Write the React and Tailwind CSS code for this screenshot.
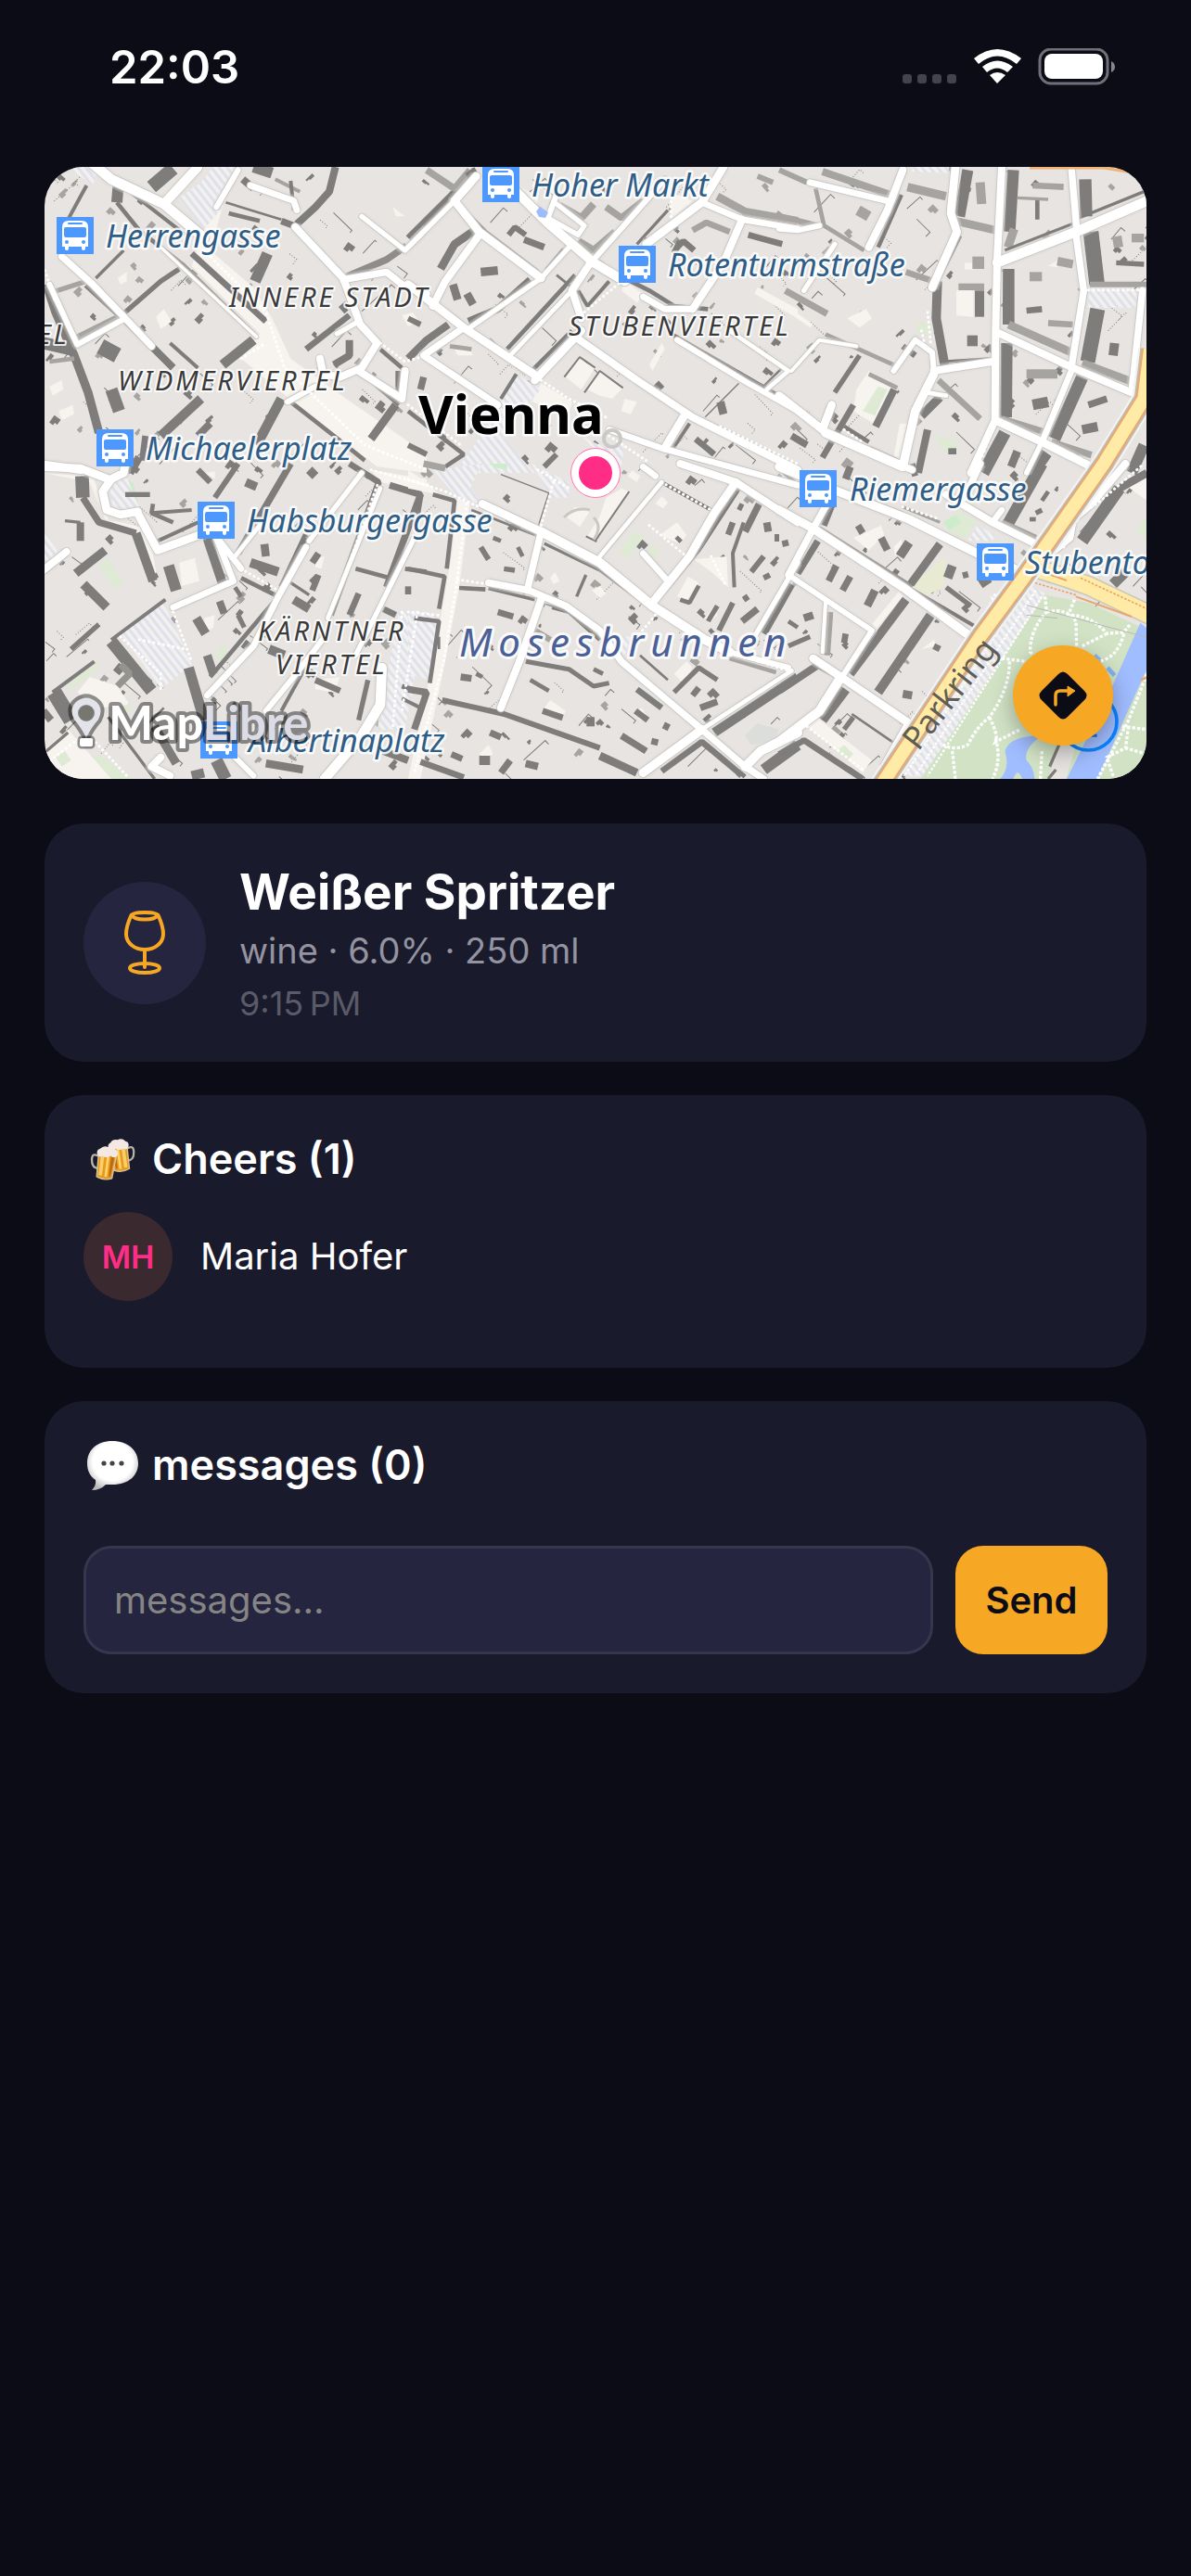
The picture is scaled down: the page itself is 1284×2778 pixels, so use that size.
import React from "react";

const DARK = "#7f7d7b";
const LIGHT = "#a6a4a1";
const CREAM = "#f7f4ef";
const GREEN = "#dfead4";

/* The map is drawn in six tiles. Each tile has its own units, three to a map pixel. */
const tiles = [
  {
    x: 40, y: 170,
    hatch: ["460,130 530,80 570,30 650,30 600,160 540,230", "100,30 200,30 180,90"],
    areas: [
      [CREAM, "540,230 600,160 560,300 700,420 760,520 820,650 1000,780 1260,960 1260,1020 1100,1000 900,850 660,650 720,570 500,350"],
      [CREAM, "385,515 410,490 435,530 400,555"], [CREAM, "260,390 290,370 290,400 270,410"],
      [CREAM, "40,740 80,720 85,750 50,770"], [CREAM, "70,820 115,800 120,830 80,850"],
      [CREAM, "1180,510 1215,500 1235,530 1200,545"], [CREAM, "1150,160 1190,190 1160,190"],
    ],
    walls: [
      [36, "262,95 258,145"], [14, "258,145 330,235 470,345 700,570"], [12, "300,110 480,250"], [44, "370,95 440,35"],
      [20, "500,310 740,530"], [36, "705,400 745,310"], [24, "840,215 900,160 945,110 965,30"],
      [22, "1000,385 1130,330 1195,285", "#8f8d8a"], [16, "285,500 400,400 460,360"], [24, "160,410 280,520 440,680"],
      [28, "30,410 60,500 120,640 165,760 200,890"], [32, "600,670 700,590"], [26, "120,590 260,520", LIGHT],
      [16, "50,435 160,400", LIGHT], [30, "400,900 530,780"], [32, "790,780 710,930"], [14, "820,790 960,900 1060,980"],
      [12, "1040,690 1170,800"], [26, "1160,800 1080,910"], [22, "1170,690 1170,760"], [20, "870,620 1010,510"],
      [40, "240,750 265,820"], [50, "205,610 260,640"], [14, "1110,620 1180,680"], [12, "100,200 160,90"], [10, "190,390 280,300"],
      [12, "770,70 850,110", LIGHT], [24, "665,70 700,100"], [36, "700,30 760,50"], [14, "620,180 720,205"], [8, "610,145 790,200"],
      [24, "1010,590 1010,640 960,670"], [12, "430,600 520,680"], [22, "790,205 830,220"], [12, "820,75 830,170"], [40, "20,600 110,620"],
      [14, "40,660 120,650", LIGHT], [20, "350,900 340,980"], [26, "330,970 300,1020"], [12, "460,860 510,790"], [24, "520,900 560,860"],
    ],
    roads: [
      [30, "180,20 240,70 410,150 540,260"], [28, "410,150 520,30"], [16, "580,160 650,40"], [18, "690,90 830,140 840,170"],
      [22, "835,225 990,390 1045,540 1100,600 1050,680 980,710 925,700 915,650"], [20, "990,395 1130,370 1180,410 1260,440"],
      [14, "1050,190 1190,300 1260,230"], [20, "80,320 180,410 285,520 370,610"], [16, "285,520 130,605 40,410"],
      [24, "0,990 140,1010"], [22, "1040,690 1180,780 1190,690"], [16, "810,790 900,740"], [8, "400,290 710,580"],
      [14, "1040,530 970,570"],
    ],
    dots: ["540,300 740,500 800,680 1060,930 1260,1010", "660,650 740,600", "1110,600 1190,660 1260,640", "20,350 60,470"],
  },
  {
    x: 440, y: 170,
    hatch: ["350,700 430,750 380,800 300,900 410,1020 150,1020 270,850", "560,900 640,940 700,920 690,1000 600,940"],
    areas: [
      [CREAM, "510,710 550,650 605,680 560,750"], [CREAM, "580,750 620,690 695,745 660,780 620,770"], [CREAM, "360,90 420,130 410,190 350,130"],
      [CREAM, "470,200 550,250 545,280 460,230"], [CREAM, "850,110 920,140 850,200"], [CREAM, "700,400 760,440 740,470 690,430"],
      [CREAM, "150,620 200,620 210,640 160,640"], [CREAM, "700,780 740,790 720,830 690,820"], [CREAM, "430,730 530,790 520,830 400,790"],
      [CREAM, "1130,420 1260,490 1260,520 1120,440"], [CREAM, "780,670 820,600 830,620 790,690"], ["#9dbcfc", "412,165 425,158 453,178 445,195 425,192"],
      ["#cdeccc", "255,960 300,945 328,980 300,1010 260,1000"],
    ],
    walls: [
      [20, "0,260 140,120 215,40"], [26, "105,360 150,280 215,235"], [14, "160,150 250,240 420,370"], [24, "195,530 290,490 395,395"],
      [14, "320,620 540,380"], [14, "400,690 530,560"], [24, "0,650 60,590 130,540"], [20, "450,365 505,300"], [12, "300,780 350,700"],
      [24, "490,155 560,195 600,150", LIGHT], [24, "550,270 600,300 670,240", LIGHT], [22, "640,160 690,195 760,140", LIGHT],
      [14, "615,335 680,380 780,430 860,480 970,490"], [12, "550,430 580,480 650,400"], [12, "570,590 740,720 930,840"],
      [14, "850,570 1250,800"], [26, "1000,125 1090,175 1260,205", LIGHT], [20, "920,235 965,210 1040,240", LIGHT], [14, "0,820 180,960 120,1000"],
      [8, "1150,740 1210,680"], [4, "960,840 1070,730"], [12, "850,950 910,860"], [22, "60,40 150,100 200,40", LIGHT], [6, "505,710 555,645 605,680"],
      [6, "570,760 620,690 695,745"], [4, "340,650 400,690"], [18, "325,250 345,225 380,250"], [22, "375,265 440,290"], [28, "235,370 290,365"],
      [26, "145,410 160,460"], [26, "190,440 210,475"], [14, "135,610 205,620", LIGHT], [22, "50,710 40,750"], [20, "870,290 890,270 925,300"],
      [20, "1100,250 1210,280"], [18, "1130,60 1180,80", LIGHT], [10, "740,280 840,170"], [20, "930,910 990,960"], [8, "480,380 530,420"],
      [26, "1010,790 1020,830"], [20, "880,270 860,310"], [18, "480,960 440,1000"], [18, "0,930 60,960"], [22, "220,40 190,60"],
      [18, "0,520 40,540"],
    ],
    roads: [
      [28, "320,80 450,210 600,340 700,400"], [18, "760,450 830,490 920,490"], [24, "220,60 150,140 230,240 430,390"], [14, "150,140 0,290"],
      [22, "230,250 120,400 80,480"], [24, "0,410 180,550 420,710"], [22, "590,340 530,430 560,520"], [24, "560,560 410,720"],
      [22, "540,580 740,720 920,840 1260,1010"], [14, "200,550 430,390 520,290"], [20, "180,550 50,640 290,800"], [12, "330,640 530,430"],
      [16, "600,330 760,150 830,70"], [16, "450,200 480,120"], [14, "460,200 550,250 570,220 480,150"], [24, "770,280 950,145 1020,30"],
      [18, "950,145 1080,200 1260,230"], [22, "1080,200 1020,340 920,490"], [16, "870,590 1100,730 1260,820"], [12, "1040,560 1230,690 1160,750"],
      [18, "650,880 820,940 1260,1060"], [24, "890,840 830,940"],
    ],
    dots: ["570,500 690,400", "430,720 520,780 640,840", "650,900 770,980", "850,110 850,200", "420,720 540,580", "0,800 170,930", "1010,870 1260,990"],
  },
  {
    x: 840, y: 170,
    hatch: ["1000,425 1180,425 1160,485 1000,485", "430,30 550,30 550,50 430,45"],
    areas: [
      [CREAM, "600,340 630,340 630,362 600,362"], [CREAM, "573,430 628,430 628,515 573,510"], [CREAM, "250,750 290,690 385,750 320,870 240,820"],
      [GREEN, "320,740 350,750 310,835 270,820"], [GREEN, "500,900 560,910 580,930 540,960"], [CREAM, "870,350 905,330 900,355"],
      [GREEN, "1005,445 1080,445 1080,480 1005,480"], [CREAM, "390,860 440,860 390,980 370,970"], [CREAM, "0,460 110,540 100,550 0,480"],
      [CREAM, "220,520 280,490 300,520 260,550"], [GREEN, "440,540 490,530 490,570 450,570"],
    ],
    walls: [
      [24, "140,45 360,120", LIGHT], [14, "320,290 395,120"], [28, "415,95 540,125", LIGHT], [36, "583,190 610,40"], [26, "570,205 700,235", LIGHT],
      [38, "745,240 757,40"], [40, "993,190 990,70"], [28, "740,290 760,230", LIGHT], [26, "510,390 580,250"], [30, "512,400 508,520 535,670"],
      [38, "742,360 742,540"], [26, "742,540 950,632", LIGHT], [50, "1008,240 1028,410"], [18, "1005,410 1190,410", LIGHT], [48, "1030,490 998,660"],
      [26, "980,665 1140,725", LIGHT], [38, "736,600 734,840"], [22, "720,845 858,888", LIGHT], [40, "980,710 890,910"], [22, "880,920 1010,962", LIGHT],
      [40, "730,890 660,1020"], [38, "865,955 820,1020"], [16, "180,760 260,640"], [20, "240,800 140,970"], [24, "372,750 312,870"],
      [14, "290,700 382,745", LIGHT], [22, "20,430 155,505", LIGHT], [14, "150,572 370,670", LIGHT], [14, "118,100 145,220 275,300", LIGHT],
      [20, "515,720 650,845", LIGHT], [28, "460,835 520,775"], [24, "480,880 450,1020"], [30, "648,430 648,515"], [22, "580,418 663,418", LIGHT],
      [40, "625,340 663,340", LIGHT], [20, "820,90 920,95", LIGHT], [14, "835,130 835,200"], [10, "770,130 870,135", LIGHT], [28, "900,335 950,345", LIGHT],
      [30, "810,385 850,385", LIGHT], [20, "800,495 850,490"], [20, "870,535 950,540", LIGHT], [34, "625,575 625,610"], [30, "1085,600 1080,640"],
      [10, "540,660 690,650"], [20, "410,370 500,400", LIGHT], [30, "650,80 655,150", LIGHT], [30, "800,700 900,700", LIGHT], [34, "820,800 870,790"],
      [22, "1000,800 1060,780"], [30, "980,880 1030,870"], [10, "730,300 960,210"], [10, "970,195 1180,110"], [14, "210,870 290,920"],
      [18, "290,940 380,980", LIGHT], [20, "400,610 440,640"], [34, "255,170 290,190", LIGHT], [36, "1180,930 1140,1020"], [20, "1070,100 1080,90", LIGHT],
      [36, "1080,275 1110,270", LIGHT], [28, "1140,260 1180,260", LIGHT], [16, "1090,340 1180,345"], [26, "770,950 750,1000"], [20, "0,190 120,220", LIGHT],
      [26, "560,940 560,960"], [22, "40,900 90,930"], [18, "0,40 90,80", LIGHT],
    ],
    roads: [
      [22, "400,40 350,170 290,290"], [24, "570,30 555,180 575,240 495,420"], [22, "720,30 705,330 700,560 698,850 620,1020"],
      [30, "705,340 960,240 1190,140"], [20, "960,250 985,430 945,680"], [20, "945,30 962,230"], [22, "705,565 950,680 1140,760"],
      [22, "500,690 690,660"], [26, "500,700 440,820 400,1000"], [16, "500,690 495,630 440,590 370,690"], [24, "700,850 850,920 1010,1000"],
      [18, "850,920 945,690"], [14, "850,920 800,1020"], [24, "0,770 140,880 170,800"], [28, "150,890 400,1000"], [18, "100,80 350,140"],
      [20, "1175,430 1140,760"], [10, "40,690 130,590 250,610"], [16, "0,230 60,235 130,220"], [14, "180,280 80,430"], [12, "480,760 540,770"],
    ],
    dots: ["1000,428 1180,428", "460,560 470,600", "640,1010 690,880", "210,880 270,920", "480,500 490,600", "1060,1010 1190,830"],
  },
  {
    x: 40, y: 500,
    hatch: ["270,550 410,450 500,650 400,730 330,630", "1170,480 1260,480 1190,860 1100,860", "20,210 70,290 20,340", "230,60 290,45 330,140 250,160"],
    areas: [
      [CREAM, "20,30 180,40 230,180 330,240 350,300 390,380 360,210 220,180 170,60"], [CREAM, "460,320 510,305 525,380 468,395"], [GREEN, "195,325 230,308 280,390 250,402"],
      ["#cdeccc", "275,50 310,60 328,130 305,140"], [CREAM, "170,690 260,720 300,780 200,790 130,740"], [GREEN, "100,1020 200,940 310,1020"],
      [GREEN, "580,610 610,580 615,610 590,650"], [GREEN, "100,710 200,640 190,670 110,730"], [CREAM, "540,500 575,490 570,530 545,545"],
      [CREAM, "900,310 930,300 920,340 900,335"], [CREAM, "20,930 100,860 240,1020 20,1020"], ["#9dbcfc", "1145,670 1160,655 1175,680 1160,700"],
      [GREEN, "60,950 90,930 110,960 80,980"], [CREAM, "545,30 575,25 575,50"], [CREAM, "1080,20 1260,50 1260,90 1110,60"], [CREAM, "900,700 980,690 960,740 900,730"],
      [GREEN, "270,800 300,770 310,800"],
    ],
    walls: [
      [18, "575,110 650,0"], [44, "145,40 148,110"], [22, "148,110 200,190 320,225"], [30, "320,225 375,380"], [12, "390,250 520,190"], [30, "550,240 602,395"],
      [22, "650,290 820,0"], [20, "790,400 870,230"], [20, "950,490 1105,60 1010,0"], [22, "1130,400 1240,100 1140,70"], [14, "660,370 780,430 560,690"],
      [36, "425,330 450,410"], [28, "125,355 220,280"], [30, "150,390 225,465"], [12, "240,570 415,440"], [40, "240,575 370,735"], [34, "490,660 540,830"],
      [50, "55,740 110,830"], [12, "50,740 185,640"], [16, "110,600 200,520"], [12, "790,800 900,600"], [28, "550,620 570,680"], [28, "380,850 450,970"],
      [40, "580,960 610,1020"], [30, "500,1010 540,1000"], [10, "30,930 100,870"], [16, "1180,720 1260,745"], [16, "285,100 365,100"], [24, "140,190 140,250"],
      [10, "90,185 140,190"], [14, "375,130 370,160 440,190"], [12, "370,160 500,150"], [24, "590,445 605,485"], [30, "515,500 545,550"], [16, "650,490 670,530"],
      [28, "830,440 880,470"], [20, "890,410 910,360"], [22, "890,320 910,290"], [26, "735,260 740,300"], [14, "1030,340 1140,370"], [20, "1010,490 1040,420"],
      [14, "1190,340 1260,350"], [26, "1190,410 1210,410"], [30, "690,320 780,350"], [10, "820,385 880,425"], [26, "740,970 860,990"], [20, "900,700 980,735"],
      [16, "1070,700 1040,830"], [12, "1180,760 1260,800"], [20, "1120,470 1160,490"], [22, "270,650 300,680 260,720", "#96948f"], [30, "750,600 800,620"], [24, "20,800 45,830"],
      [28, "880,20 900,40"], [20, "520,20 560,60"], [28, "675,60 710,75"], [24, "1120,930 1200,960"], [14, "640,400 660,430"], [10, "230,820 380,1020"], [22, "1240,550 1240,600"],
      [16, "370,370 390,360"], [8, "350,850 410,790"],
    ],
    roads: [
      [24, "0,10 140,15 230,50"], [24, "285,0 280,30 240,50 212,90 225,150 270,165 325,155"], [24, "325,160 390,280 540,225"], [18, "580,240 635,380 440,465"],
      [18, "590,250 660,340"], [12, "1110,80 940,500"], [14, "1220,240 1120,440 1030,620"], [14, "1050,30 880,250"], [18, "870,270 780,430 700,590 550,750"],
      [16, "930,560 830,690 740,800"], [30, "1115,660 1110,780 1050,880 930,1020"], [22, "20,345 95,285"], [22, "430,1010 370,980 400,950"], [16, "640,950 700,1010"],
      [12, "720,200 640,300"],
    ],
    dots: ["270,560 400,680 400,730", "330,570 480,600", "440,480 500,640", "320,160 380,280", "660,340 780,410", "1180,480 1150,860", "30,970 160,870 290,1010", "1100,70 960,460", "1080,20 1260,70", "1230,480 1180,800"],
  },
  {
    x: 440, y: 500,
    hatch: ["80,20 240,0 200,80 240,130 160,110", "400,0 520,60 520,110 460,110", "0,480 100,490 70,700 0,680", "640,550 720,560 700,620 650,610"],
    areas: [
      [CREAM, "160,110 200,130 165,400 120,640 40,1020 0,1020 80,640 140,300"], [CREAM, "0,20 60,60 100,100 0,80"], [CREAM, "510,170 540,140 590,150 555,205"],
      [CREAM, "640,110 690,80 715,90 610,250 580,235 620,170"], [GREEN, "685,285 725,220 765,235 710,305"], [GREEN, "770,280 790,260 815,285 790,310"],
      [CREAM, "815,230 870,190 900,230 880,260"], [CREAM, "870,430 905,365 940,385 900,445"], [CREAM, "925,310 1030,300 1035,400 980,350"], [CREAM, "595,410 620,395 640,420 620,435"],
      [CREAM, "860,680 900,640 920,660 890,710"], [CREAM, "440,790 460,765 510,800 500,820"], [CREAM, "735,800 755,790 775,820 750,830"], [CREAM, "230,940 260,910 275,940 250,950"],
      [CREAM, "460,370 475,350 490,380 470,390"], [CREAM, "800,130 820,105 840,125 825,145"], [CREAM, "710,40 725,22 750,40 740,60"], [CREAM, "960,500 990,460 1000,490 975,515"],
      ["#dcdedb", "1090,880 1130,840 1200,860 1180,900 1110,910"], ["#cdeccc", "260,0 320,0 320,20 280,12"],
    ],
    walls: [
      [8, "205,150 420,235"], [4, "300,35 455,95 415,220"], [10, "440,258 620,345 780,465 940,565"], [14, "165,402 250,407"], [12, "260,403 410,440"],
      [13, "430,455 520,480 620,570"], [14, "80,100 150,120 125,340"], [14, "0,340 118,365 100,470"], [14, "20,500 100,510 70,710"], [22, "0,730 60,740 20,860"],
      [15, "380,640 520,665 600,720 650,710"], [18, "110,765 310,810 620,920"], [26, "620,945 740,1000"], [20, "40,965 180,1015"], [10, "690,640 820,760 910,830"],
      [20, "740,730 820,790"], [14, "1070,80 940,280 800,450"], [22, "1135,130 1090,220"], [12, "1085,190 1050,290 1055,400"], [18, "1050,450 1005,540"],
      [24, "1240,390 1150,550"], [30, "990,870 1260,690"], [20, "820,995 950,900 1070,1000"], [36, "1150,990 1260,910"], [16, "860,740 940,660 1000,700"],
      [6, "605,250 715,90"], [4, "625,305 810,60"], [14, "880,440 910,450 940,395"], [16, "970,510 1000,460"], [6, "575,235 610,252"], [10, "15,90 45,100 30,190"],
      [18, "235,270 260,310"], [14, "275,240 300,250"], [16, "310,340 345,345"], [14, "355,270 370,300"], [10, "545,430 575,360"], [20, "290,480 340,495"],
      [22, "170,690 205,695"], [14, "220,680 240,690"], [20, "435,800 500,822"], [14, "395,700 455,735"], [26, "590,820 590,850"], [22, "690,880 770,930"],
      [20, "735,800 775,830"], [22, "265,870 300,885"], [30, "230,960 265,960"], [22, "300,1000 330,960"], [20, "140,940 175,955"], [24, "380,970 420,980"],
      [22, "945,790 1000,770"], [20, "920,750 940,725"], [14, "1040,630 1190,675", LIGHT], [18, "1110,350 1150,300"], [20, "1085,440 1100,430"], [22, "1080,510 1130,470"],
      [18, "1150,370 1170,360"], [24, "1185,240 1200,240"], [20, "1035,230 1050,190"], [24, "1160,190 1165,220"], [16, "1070,150 1080,130"], [22, "870,250 880,240"],
      [14, "600,665 630,680"], [8, "100,600 100,560"], [24, "455,460 440,500", "#e7e4e1"], [20, "410,540 460,570", LIGHT], [8, "750,620 840,700"], [22, "50,0 120,15", LIGHT],
      [20, "830,860 840,840"], [22, "800,890 795,910"], [12, "820,60 980,150"],
    ],
    roads: [
      [24, "240,130 430,220"], [28, "430,220 620,320 790,460 960,570 1040,610"], [20, "430,220 385,410"], [16, "1040,610 1230,660"], [20, "260,385 390,410 510,460 620,540 690,640 820,750 950,860 1090,980 1150,1020"],
      [22, "430,440 360,640 300,790"], [26, "950,860 760,1000"], [12, "950,860 1240,670"], [24, "790,450 910,300 990,160 1060,60"], [22, "880,0 1060,60 1260,190"],
      [12, "620,300 720,180 820,60"], [18, "760,290 840,380"], [28, "1090,980 1140,930 1260,870"], [14, "1260,320 1120,560"], [18, "760,10 800,40"],
    ],
    dots: ["190,130 155,400 115,640 20,1000", "0,50 120,90 230,140", "470,60 430,200", "0,480 100,490", "780,200 900,300", "820,60 980,150", "420,20 520,80", "800,490 740,560", "980,300 1030,400", "1040,610 1230,670", "160,375 260,390"],
  },
  {
    x: 840, y: 500,
    hatch: ["640,200 700,230 690,250 610,250", "780,380 860,420 480,1010 400,1010", "680,430 720,420 700,460"],
    areas: [
      [GREEN, "580,150 640,190 600,240 540,220"], ["#cdeccc", "530,190 570,165 590,190 550,215"], [CREAM, "80,840 120,820 300,960 270,1000"],
      [GREEN, "185,930 210,910 240,940 220,960"], [CREAM, "240,240 330,200 340,230 290,280"], [CREAM, "370,270 395,245 400,270 375,300"], ["#e8ead2", "430,390 540,300 530,400 450,440"],
      [CREAM, "1120,70 1190,30 1190,120"], [GREEN, "1150,220 1190,170 1190,240"], [CREAM, "300,520 390,410 400,430 310,540"], [CREAM, "460,600 500,570 510,590"],
    ],
    walls: [
      [26, "520,260 425,390"], [20, "145,200 175,125"], [22, "60,355 125,250"], [28, "230,680 410,440"], [30, "320,740 490,490"], [32, "140,830 215,730"], [24, "0,735 120,655"],
      [20, "0,940 80,895 270,1020"], [38, "740,195 850,0"], [20, "720,190 830,240", LIGHT], [40, "980,250 1100,80"], [26, "1100,80 1190,30"], [34, "1080,390 1120,350"], [14, "20,380 0,450"],
      [20, "165,480 155,620", LIGHT], [8, "235,810 395,920"], [16, "210,860 240,820"], [22, "255,200 270,225"], [24, "330,240 350,280"], [30, "390,300 420,255"], [22, "160,380 185,330"],
      [22, "205,410 230,365"], [26, "285,460 310,410"], [30, "545,370 560,330"], [16, "540,400 620,460"], [18, "600,350 605,370"], [26, "400,745 430,750"], [20, "500,590 520,600"],
      [16, "130,210 430,400"], [12, "400,390 640,530"], [10, "110,650 200,700"], [24, "80,500 110,490"], [20, "210,580 215,550"], [14, "30,510 60,530"], [30, "650,390 680,370"],
      [16, "830,160 850,150"], [14, "810,180 830,180"], [20, "440,40 430,0"], [24, "215,50 230,10"], [10, "400,140 520,190", LIGHT], [10, "270,110 400,160"],
      [16, "30,590 100,560"], [20, "10,260 30,255"], [14, "850,120 870,90"], [12, "0,15 50,60"],
    ],
    roads: [
      [26, "0,10 190,90 420,180 640,290 760,340"], [26, "0,150 110,210 400,400 620,560"], [20, "30,360 110,210 160,120"], [16, "30,360 300,540 210,680"],
      [24, "110,630 200,690 420,840 340,980"], [28, "200,690 130,800 0,900"], [22, "540,100 690,190 830,260"], [18, "690,190 720,150"], [20, "600,110 650,0"], [20, "380,0 430,20"],
      [22, "890,280 940,240 950,180 1010,130 1120,0"], [10, "150,450 140,610"],
    ],
    dots: ["90,850 270,990", "920,270 970,170 1040,120 1180,0", "640,540 700,420", "400,140 520,180"],
  },
];

function seeded(seed) {
  let s = seed;
  return () => {
    s = (s * 16807) % 2147483647;
    return s / 2147483647;
  };
}

/* Roof details: small dark courtyards and thin parapet lines spread over the blocks. */
const clutter = (() => {
  const r = seeded(4211);
  const out = [];
  for (let i = 0; i < 520; i++) {
    const x = 48 + r() * 1188;
    const y = 180 + r() * 660;
    const a = (r() > 0.5 ? 35 : -52) + r() * 12;
    const w = 3 + r() * 8;
    const h = 2 + r() * 5;
    out.push({ x, y, a, w, h, thin: r() > 0.65, dot: r() > 0.6, tone: r() > 0.35 ? DARK : LIGHT });
  }
  return out;
})();

const busStops = [
  [61, 234, "Herrengasse", 114, 267],
  [104, 463, "Michaelerplatz", 157, 496],
  [520, 178, "Hoher Markt", 573, 212],
  [667, 265, "Rotenturmstraße", 720, 298],
  [862, 507, "Riemergasse", 916, 540],
  [1053, 586, "Stubentor", 1105, 619],
  [213, 541, "Habsburgergasse", 266, 574],
  [216, 778, "Albertinaplatz", 268, 811],
];

const districts = [
  [-46, 371, "VIERTEL"],
  [247, 331, "INNERE STADT"],
  [127, 421, "WIDMERVIERTEL"],
  [613, 362, "STUBENVIERTEL"],
  [278, 691, "KÄRNTNER"],
  [297, 727, "VIERTEL"],
];

function Bus({ x, y }) {
  return (
    <g transform={`translate(${x} ${y})`} strokeWidth="0">
      <rect width="40" height="40" fill="#4d98ff" />
      <path d="M6 32V11Q6 4 13 4H27Q34 4 34 11V32H31V34Q31 36 29 36T27 34V32H13V34Q13 36 11 36T9 34V32Z" fill="#fff" />
      <rect x="12" y="6" width="16" height="2" rx="1" fill="#4d98ff" />
      <rect x="8" y="11" width="24" height="11" rx="2" fill="#4d98ff" />
      <circle cx="11" cy="27" r="2" fill="#4d98ff" />
      <circle cx="29" cy="27" r="2" fill="#4d98ff" />
    </g>
  );
}

function MapView() {
  const tf = (t) => `translate(${t.x} ${t.y}) scale(0.33333)`;
  return (
    <svg viewBox="48 180 1188 660" className="block h-auto w-full" role="img" aria-label="Map of Vienna">
      <defs>
        <pattern id="hatchTile" width="20" height="20" patternUnits="userSpaceOnUse" patternTransform="rotate(-38)">
          <rect width="20" height="20" fill="#f3f1ee" />
          <rect width="9" height="20" fill="#dee1ec" />
        </pattern>
      </defs>
      <rect x="48" y="180" width="1188" height="660" fill="#e7e4e1" />
      {clutter.map((c, i) => (
        <g key={i} transform={`translate(${c.x} ${c.y}) rotate(${c.a})`}>
          {c.thin ? (
            <path d={`M0 0H${c.w * 3}V${c.h}`} fill="none" stroke={DARK} strokeWidth="1" strokeDasharray={c.dot ? "1 2" : undefined} />
          ) : (
            <path d={`M0 0H${c.w}V${c.h}H${c.w * 0.6}V${c.h * 1.5}H0Z`} fill={c.tone} />
          )}
        </g>
      ))}
      {tiles.map((t, i) => (
        <g key={i} transform={tf(t)}>
          {t.areas.map(([c, p], k) => <polygon key={k} points={p} fill={c} />)}
          {t.hatch.map((p, k) => <polygon key={k} points={p} fill="url(#hatchTile)" />)}
          {t.walls.map(([w, p, c], k) => <polyline key={k} points={p} fill="none" stroke={c || DARK} strokeWidth={w} strokeLinejoin="bevel" />)}
        </g>
      ))}
      {tiles.map((t, i) => (
        <g key={i} transform={tf(t)} fill="none" stroke="#dcd9d6" strokeLinejoin="round">
          {t.roads.map(([w, p], k) => <polyline key={k} points={p} strokeWidth={w + 20} strokeOpacity="0.35" />)}
        </g>
      ))}
      {tiles.map((t, i) => (
        <g key={i} transform={tf(t)} fill="none" stroke="#cbc9c5" strokeLinejoin="round" strokeLinecap="round">
          {t.roads.map(([w, p], k) => <polyline key={k} points={p} strokeWidth={w + 8} />)}
        </g>
      ))}
      {tiles.map((t, i) => (
        <g key={i} transform={tf(t)} fill="none" stroke="#fff" strokeLinejoin="round" strokeLinecap="round">
          {t.roads.map(([w, p], k) => <polyline key={k} points={p} strokeWidth={w + 2} />)}
          {t.dots.map((p, k) => <polyline key={k} points={p} strokeWidth="9" strokeDasharray="1 15" />)}
        </g>
      ))}
      <circle cx="660" cy="473" r="9" fill="none" stroke="#cbc9c5" strokeWidth="4" />
      <path d="M608 558Q620 546 636 550M640 558Q650 568 640 582" fill="none" stroke="#c9c8c3" strokeWidth="3" />

      {/* Stadtpark, river and the ring road */}
      <g transform="translate(840 500) scale(0.33333)" fill="none">
        <polygon points="860,425 1000,450 1150,520 1200,540 1200,1030 450,1030 560,870" fill="#d2e3c5" />
        <path d="M1168 515L1200 540V640L1025 1030H925L1060 760Z" fill="#a0bdff" />
        <path d="M705 1030Q750 990 730 930Q745 880 850 880Q790 920 800 960Q830 990 825 1030H790Q770 970 755 1030Z" fill="#a0bdff" />
        <path d="M870 1030L900 910L960 910L925 1030Z" fill="#e7e4e1" />
        <path d="M905 910L875 980M895 990L870 1020" stroke={DARK} strokeWidth="10" />
        <path d="M1020 620L1040 640M1062 660L1085 685" stroke="#85b5f6" strokeWidth="14" />
        <g stroke="#fff" strokeWidth="10" strokeDasharray="10 6">
          <path d="M860 430L865 480Q810 540 812 610L870 660" />
          <path d="M865 480Q930 465 960 510L962 590" />
          <path d="M955 440L935 490Q1010 490 1060 550L1115 545L1135 520" />
          <path d="M980 590L1060 550M1115 550Q1090 640 1020 640" />
          <path d="M720 630L800 640M745 640Q745 730 680 820Q640 850 610 910Q570 930 530 910" />
          <path d="M680 820Q710 880 700 900L780 860M700 890Q720 960 690 1020M560 930L570 1020M850 930L845 1020" />
          <path d="M1190 680L1130 830L1030 1020M1110 850L1190 860M1130 850L1120 920L1060 950L1080 1010M1190 940L1120 920" />
        </g>
        <g stroke="#fff" strokeWidth="7" strokeDasharray="8 6">
          <path d="M830 410L440 1010M850 430L480 1010M800 400L405 1010" />
        </g>
        <path d="M800 458L1190 562M800 490L900 500" stroke="#b9b9b4" strokeWidth="3" />
        <polyline points="820,335 930,370 1000,395 1200,490" stroke="#cbc9b8" strokeWidth="66" />
        <polyline points="820,335 930,370 1000,395 1200,490" stroke="#ffeba5" strokeWidth="56" />
        <path d="M850 350L930 378M960 430L1140 495" stroke="#e9a56b" strokeWidth="6" />
        <path d="M975 370L1190 470M815 382L960 425" stroke="#e9a56b" strokeWidth="5" strokeDasharray="8 5" />
        <polyline points="1200,-370 1180,-210 1050,0 790,370 650,560 350,1010 330,1040" stroke="#f4f2ef" strokeWidth="78" />
        <polyline points="1200,-370 1180,-210 1050,0 790,370 650,560 350,1010 330,1040" stroke="#bdbbb5" strokeWidth="64" />
        <polyline points="1200,-370 1180,-210 1050,0 790,370 650,560 350,1010 330,1040" stroke="#e8a86f" strokeWidth="54" />
        <polyline points="1200,-370 1180,-210 1050,0 790,370 650,560 350,1010 330,1040" stroke="#ffeba5" strokeWidth="42" />
        <path d="M1170 700L1195 690V850" stroke="#e9a56b" strokeWidth="8" />
        <circle cx="1000" cy="835" r="92" stroke="#0a84ff" strokeWidth="11" />
        <path d="M1005 880H1028" stroke="#0a74e8" strokeWidth="9" />
      </g>
      <path d="M1110 181H1190L1220 186" fill="none" stroke="#f0b277" strokeWidth="3" />
      <path d="M578 228L582 223L591 229L588 235L581 234Z" fill="#9dbcfc" />

      <g fontFamily='"Noto Sans", sans-serif' paintOrder="stroke" strokeLinejoin="round" stroke="#fff" strokeOpacity="0.85">
        {busStops.map(([x, y]) => <Bus key={x} x={x} y={y} />)}
        <g fontSize="34" fontStyle="italic" fill="#2e5d87" strokeWidth="5">
          {busStops.map(([, , name, x, y]) => <text key={name} x={x} y={y}>{name}</text>)}
        </g>
        <g fontSize="29" fontStyle="italic" fill="#3a3a3a" strokeWidth="4" className="tracking-widest">
          {districts.map(([x, y, name]) => <text key={x} x={x} y={y}>{name}</text>)}
        </g>
        <text x="495" y="708" fontSize="42" fontStyle="italic" fill="#4a6097" strokeWidth="6" className="tracking-[7px]">Mosesbrunnen</text>
        <text x="451" y="468" fontSize="58" fontWeight="700" fill="#000" strokeWidth="5">Vienna</text>
        <text transform="translate(990 811) rotate(-52)" fontSize="35" fill="#5f5d55" strokeWidth="0">Parkring</text>
      </g>

      {/* Map provider mark */}
      <g paintOrder="stroke" stroke="#000" strokeOpacity="0.42" strokeWidth="8" strokeLinejoin="round" fill="#fff">
        <path fillRule="evenodd" d="M93 796Q88 785 80 776Q74 764 82 757Q93 748 104 757Q112 764 106 776Q98 785 93 796Z" fill="#e3e3ea" />
        <circle cx="93" cy="769" r="8" fill="#77766f" strokeWidth="2" />
        <rect x="86" y="796" width="14" height="9" rx="2" strokeWidth="5" />
        <text x="117" y="798" fontFamily="Lato, sans-serif" fontWeight="700" fontSize="51">Map<tspan fill="#dcdce6">Libre</tspan></text>
      </g>

      <circle cx="642" cy="510" r="27" fill="#ff7db3" />
      <circle cx="642" cy="510" r="26" fill="#fff" />
      <circle cx="642" cy="510" r="18" fill="#ff2d86" />
    </svg>
  );
}

function StatusBar() {
  return (
    <header className="flex h-36 items-center justify-between pr-8 pl-[70px] text-white">
      <time className="text-[49px] leading-none font-semibold">22:03</time>
      <svg width="232" height="40" viewBox="972 53 232 40" aria-label="Wi-Fi connected, battery full" role="img">
        {[973, 989, 1005, 1021].map((x) => <rect key={x} x={x} y="81" width="10" height="10" rx="3" fill="#43434d" />)}
        <path d="M1050 64Q1075 44 1101 64L1096 70Q1075 53 1055 70Z" fill="#fff" />
        <path d="M1059 73Q1075 60 1092 73L1086 79Q1075 70 1064 79Z" fill="#fff" />
        <path d="M1067 82Q1075 76 1084 82L1075 91Z" fill="#fff" />
        <rect x="1121" y="54" width="73" height="37" rx="12" fill="none" stroke="#6f6f78" strokeWidth="3" />
        <rect x="1126" y="59" width="63" height="27" rx="8" fill="#fff" />
        <path d="M1198 67Q1202 69 1202 73T1198 79Z" fill="#85858d" />
      </svg>
    </header>
  );
}

function WineGlass() {
  return (
    <svg width="46" height="70" viewBox="0 0 46 70" fill="none" stroke="#f6a723" strokeWidth="4" aria-hidden="true">
      <path d="M8 6Q9 2 23 2T38 6C41 13 43 20 43 25C43 35 34 42 23 42S3 35 3 25C3 20 5 13 8 6Z" />
      <path d="M9 5C12 11 34 11 37 5" />
      <path d="M23 42V61" strokeLinecap="round" />
      <ellipse cx="23" cy="62" rx="16" ry="5" />
    </svg>
  );
}

function Mug({ flip }) {
  return (
    <g transform={flip ? "translate(47 1) rotate(-8) scale(-0.9 0.9)" : "translate(4 9) rotate(7) scale(0.92)"}>
      <path d="M9 12Q0 8 1 17Q2 27 10 26" fill="none" stroke="#b9b5a6" strokeWidth="2.5" />
      <path d="M8 7H29L27 36Q18 40 9 36Z" fill="#e9991d" stroke="#d6c49c" strokeWidth="1.5" />
      <path d="M11 10H15L15 34H11Z" fill="#f9cf6b" />
      <path d="M18 10H21V35H18Z" fill="#fbd46c" />
      <path d="M23 10H27L25 34H23Z" fill="#b96a12" />
      <path d="M7 11Q4 5 9 3Q13 -2 18 0Q24 -2 27 2Q32 4 30 9Q27 13 22 10Q17 14 13 11Q10 14 7 11Z" fill="#f3e9e2" />
    </g>
  );
}

function BeerMugs() {
  return (
    <svg width="51" height="48" viewBox="0 0 51 48" role="img" aria-label="Clinking beer mugs">
      <Mug flip />
      <Mug />
    </svg>
  );
}

function SpeechBubble() {
  return (
    <svg width="57" height="55" viewBox="0 0 57 55" role="img" aria-label="Speech bubble">
      <defs>
        <radialGradient id="bubble" cx="0.5" cy="0.42" r="0.6">
          <stop offset="0.65" stopColor="#fff" />
          <stop offset="1" stopColor="#b9b9b9" />
        </radialGradient>
      </defs>
      <path d="M28 1C45 1 56 11 56 25C56 38 46 48 28 48Q24 48 21 48Q15 54 6 54Q11 49 10 43C4 39 1 33 1 25C1 11 11 1 28 1Z" fill="url(#bubble)" />
      <circle cx="19" cy="25" r="2.6" fill="#444" />
      <circle cx="28" cy="25" r="2.6" fill="#444" />
      <circle cx="38" cy="25" r="2.6" fill="#444" />
    </svg>
  );
}

function Card({ children, className = "p-[42px]" }) {
  return <section className={`rounded-[42px] bg-[#1a1a2d] ${className}`}>{children}</section>;
}

export default function App() {
  return (
    <div className="min-h-screen bg-[#0c0c17] font-[Inter,sans-serif] text-white">
      <div className="px-12">
        <StatusBar />
        <main className="flex flex-col gap-9 pt-9">
          <div className="relative mb-3 overflow-hidden rounded-[42px]">
            <MapView />
            <button
              type="button"
              aria-label="Directions"
              className="absolute right-9 bottom-9 flex size-[108px] items-center justify-center rounded-full bg-[#f6a723] shadow-[0_8px_24px_rgba(0,0,0,0.3)]"
            >
              <svg width="52" height="52" viewBox="0 0 52 52" aria-hidden="true">
                <path d="M21 3Q26 -2 31 3L49 21Q54 26 49 31L31 49Q26 54 21 49L3 31Q-2 26 3 21Z" fill="#0c0c17" />
                <path d="M18 36V26Q18 21 23 21H32" fill="none" stroke="#f6a723" strokeWidth="3.5" strokeLinecap="round" />
                <path d="M31 16L39 21L31 27Z" fill="#f6a723" stroke="#f6a723" strokeLinejoin="round" />
              </svg>
            </button>
          </div>

          <Card className="flex items-center gap-9 px-[42px] py-9">
            <div className="flex size-[132px] shrink-0 items-center justify-center rounded-full bg-[#25253f]">
              <WineGlass />
            </div>
            <div className="min-w-0 pt-[5px]">
              <h1 className="text-[53px] leading-[66px] font-bold">Weißer Spritzer</h1>
              <p className="text-[38px] leading-[60px] text-[#9494a0]">wine · 6.0% · 250 ml</p>
              <p className="text-[36px] leading-[54px] text-[#5b5b68]">9:15{"\u2009"}PM</p>
            </div>
          </Card>

          <Card>
            <h2 className="flex h-[54px] items-center gap-3 text-[45px] font-semibold">
              <span className="flex w-[62px] justify-center"><BeerMugs /></span>
              Cheers (1)
            </h2>
            <ul className="mt-[30px] pb-[30px]">
              <li className="flex items-center gap-[30px]">
                <span className="flex size-24 items-center justify-center rounded-full bg-[#3a292e] text-[34px] font-semibold text-[#ff2d86]">MH</span>
                <span className="text-[40px]">Maria Hofer</span>
              </li>
            </ul>
          </Card>

          <Card>
            <h2 className="flex h-[54px] items-center gap-3 text-[45px] font-semibold">
              <span className="flex w-[62px] justify-center"><SpeechBubble /></span>
              messages (0)
            </h2>
            <form className="mt-[60px] flex gap-6" onSubmit={(e) => e.preventDefault()}>
              <input
                type="text"
                aria-label="messages"
                placeholder="messages..."
                className="h-[117px] min-w-0 flex-1 rounded-[30px] border-3 border-[#36364d] bg-[#25253f] px-[30px] text-[40px] text-white placeholder:text-[#858585]"
              />
              <button type="submit" className="w-[164px] rounded-[30px] bg-[#f6a723] text-[40px] font-semibold text-[#0c0c17]">
                Send
              </button>
            </form>
          </Card>
        </main>
      </div>
    </div>
  );
}
